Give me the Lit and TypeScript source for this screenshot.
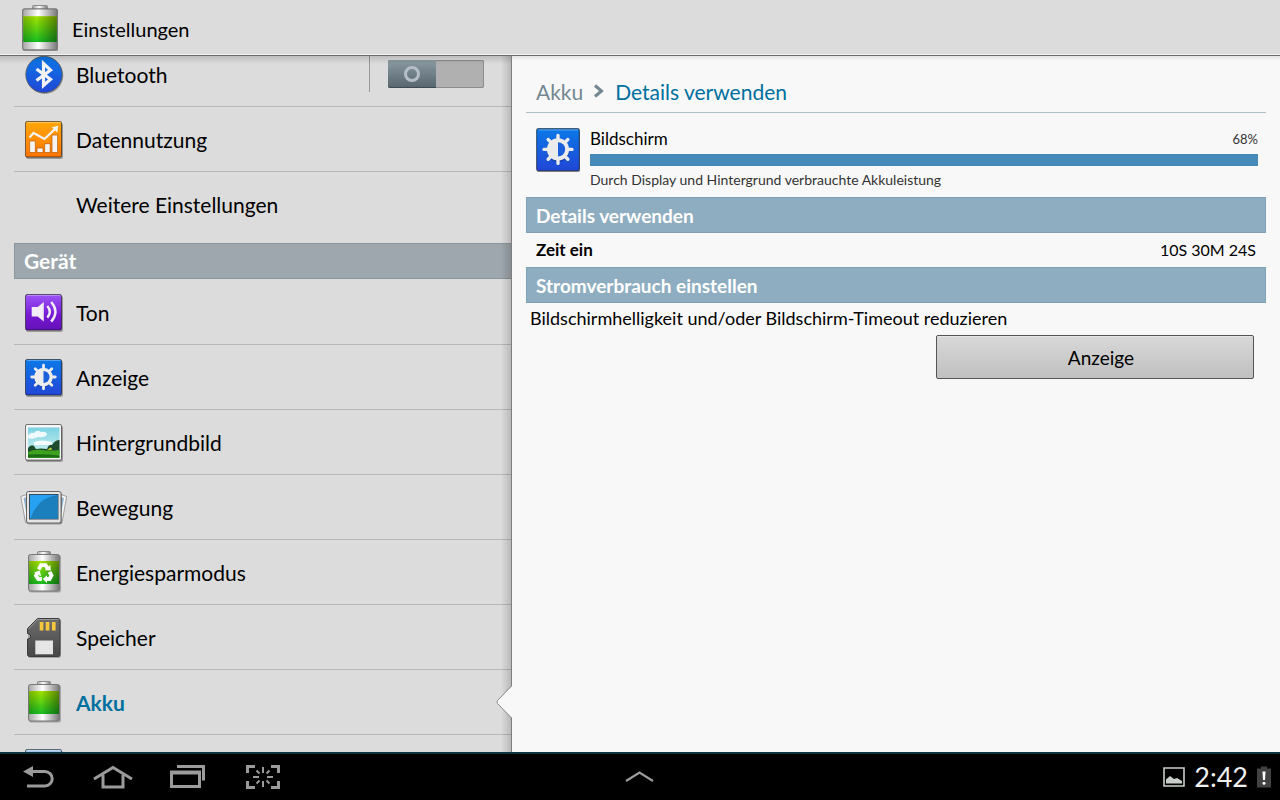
import { LitElement, html, svg, css, nothing } from "lit";
import { customElement, property, state } from "lit/decorators.js";

const gear = svg`
  <g fill="#000" opacity=".2"><circle cx="23.5" cy="25" r="9.6"/></g>
  <circle cx="23.5" cy="24" r="9.3" fill="#ececec"/>
  <g stroke="#ececec" stroke-width="2.8" stroke-linecap="round">
    <path d="M23.5 12.2V16M23.5 32V35.8M11.7 24H15M32 24H35.3M15.200 15.700L18 18.500M31.800 15.700L29 18.500M15.200 32.300L18 29.500M31.800 32.300L29 29.500"/>
  </g>
  <path d="M23.5 18a6 6 0 0 1 0 12z" fill="#1b5fdc"/>`;

const square = (fill: string) => svg`
  <rect x="6" y="8" width="37" height="36" rx="2" fill="#000" opacity=".3"/>
  <rect x="5.5" y="6.5" width="36" height="35.5" rx="1.5" fill=${fill} stroke="#000" stroke-opacity=".5"/>
  <path d="M7 7.5H40.5" stroke="#fff" stroke-opacity=".3"/>`;

const battery = svg`
  <defs>
    <linearGradient id="metal"><stop offset="0" stop-color="#a5a5a5"/><stop offset=".45" stop-color="#fff"/><stop offset="1" stop-color="#777"/></linearGradient>
    <linearGradient id="charge" x2="0" y2="1"><stop offset="0" stop-color="#a3e300"/><stop offset="1" stop-color="#17bf22"/></linearGradient>
    <linearGradient id="shade"><stop offset="0" stop-color="#000" stop-opacity=".22"/><stop offset=".4" stop-color="#000" stop-opacity="0"/><stop offset="1" stop-color="#000" stop-opacity=".42"/></linearGradient>
  </defs>
  <rect x="17.5" y="3.5" width="13" height="5" rx="1" fill="url(#metal)" stroke="#8a8a8a"/>
  <rect x="9" y="7" width="32" height="37.5" rx="2" fill="#000" opacity=".25"/>
  <rect x="8.5" y="6.5" width="31" height="36.5" rx="2" fill="url(#metal)" stroke="#777"/>
  <rect x="9" y="13" width="30" height="23" fill="url(#charge)"/>
  <rect x="9" y="13" width="30" height="23" fill="url(#shade)"/>`;

const blueDefs = svg`<defs><linearGradient id="blue" x2="0" y2="1"><stop offset="0" stop-color="#0b79e8"/><stop offset="1" stop-color="#2146d6"/></linearGradient></defs>`;

const icons: Record<string, unknown> = {
  bluetooth: svg`${blueDefs}
    <circle cx="24.8" cy="25.5" r="18.5" fill="#000" opacity=".3"/>
    <circle cx="24" cy="24.5" r="18.2" fill="url(#blue)" stroke="#555" stroke-width=".8"/>
    <path d="M16.500 19L30.500 29.300L23.500 35.500V13.500L30.500 20L16.500 30.500" fill="none" stroke="#f2f2f2" stroke-width="3.200"/>`,
  data: svg`
    <defs><linearGradient id="orange" x2="0" y2="1"><stop offset="0" stop-color="#ffa80a"/><stop offset="1" stop-color="#ff7400"/></linearGradient></defs>
    ${square("url(#orange)")}
    <g fill="#f4f4f4" stroke="#b85a00" stroke-width=".7">
      <path d="M9.700 26h5.600v11.500h-5.600zM17 33h6v4.500h-6zM24.700 28.700h5.500v8.800h-5.500zM32 20h5.600v17.500h-5.600z"/>
    </g>
    <path d="M9.500 22.500L13.500 18L24.500 24L36 13" fill="none" stroke="#f4f4f4" stroke-width="2.200"/>
    <path d="M31.800 12.300L38.200 10.800L37.300 17.500Z" fill="#f4f4f4"/>`,
  sound: svg`
    <defs><linearGradient id="violet" x2="0" y2="1"><stop offset="0" stop-color="#9d55f8"/><stop offset=".6" stop-color="#7616d2"/><stop offset="1" stop-color="#6411b8"/></linearGradient></defs>
    ${square("url(#violet)")}
    <path d="M11.700 19h6L23.800 14V33.600L17.700 28.600h-6z" fill="#f1ecf5"/>
    <path d="M27.300 18q5 5.800 0 11.600M31.200 14q8.500 9.800 0 19.600" fill="none" stroke="#f1ecf5" stroke-width="2.400"/>`,
  display: svg`${blueDefs}${square("url(#blue)")}${gear}`,
  wallpaper: svg`
    <defs><linearGradient id="sky" x2="0" y2="1"><stop offset="0" stop-color="#7bd2e2"/><stop offset="1" stop-color="#dcf5f2"/></linearGradient></defs>
    ${square("#f5f5f5")}
    <rect x="8" y="9.5" width="31.5" height="30" fill="url(#sky)"/>
    <path d="M8 18q2-4 6-3q3-4 7-1q6-1 6 3q-3 3-9 2q-6 3-10 1zM14 24q8-3 18 0v3H14z" fill="#fff" opacity=".85"/>
    <path d="M8 30q3-4 6-2l2 3q5-1 11 0q2-5 5-4q3-5 7.500-5V36H8z" fill="#1f4a2c"/>
    <path d="M8 34q6-3 14-2q8 1 17.500 0v8H8z" fill="#3da31e"/>
    <path d="M8 36.500q14-1 31.500 1v2H8z" fill="#1c6a14"/>
    <path d="M27 32l4-2.500l1 2z" fill="#d7e32e"/>`,
  motion: svg`
    <g stroke="#8c8c8c" stroke-width=".8">
      <path d="M.8 13.500L8 11V40L5.500 39.500Z" fill="#f4f4f4"/><path d="M3.500 15L7 14V34Z" fill="#8eb4cc" stroke="none"/>
      <path d="M46.700 13.500L39.500 11V40L42 39.500Z" fill="#f4f4f4"/><path d="M44 15L40.500 14V34Z" fill="#8eb4cc" stroke="none"/>
    </g>
    <rect x="7" y="9.5" width="35" height="32" rx="2" fill="#000" opacity=".3"/>
    <rect x="6.5" y="8.5" width="34.5" height="31.5" rx="2" fill="#e4e4e4" stroke="#666"/>
    <rect x="9.5" y="11.5" width="28.5" height="24.5" fill="#27a2f2" stroke="#3a4d5a"/>
    <path d="M37.500 12Q18 14 10.500 35.500H37.500Z" fill="#1c7fbd"/>`,
  saver: svg`${battery}
    <g fill="none" stroke="#fff" stroke-width="3.8">
      <path d="M18.700 21.500L21 17.200h4.500L27.500 20.300"/>
      <path d="M29.500 23.800L31.500 27.500L29.500 31H25.500"/>
      <path d="M21.800 31H18.300L16 27.600L17.500 25"/>
    </g>
    <path d="M24.700 22.300L30.800 22.500L30.300 16.800ZM27 27.200L22.700 31L27 35ZM14 24.600L19.800 22.500L21 28.200Z" fill="#fff"/>`,
  storage: svg`
    <defs><linearGradient id="card" x2="0" y2="1"><stop offset="0" stop-color="#6d6d6d"/><stop offset="1" stop-color="#474747"/></linearGradient></defs>
    <path d="M18 6.500H39q2 0 2 2V43q0 2-2 2H10q-2 0-2-2V18z" fill="#000" opacity=".25"/>
    <path d="M17.500 5.500H38q2 0 2 2V41.500q0 2-2 2H9.500q-2 0-2-2V26l3-1V22L7.500 20.500V15.500z" fill="url(#card)" stroke="#3c3c3c"/>
    <path d="M17.700 6.500H38.500M8.500 16L17.700 6.500" fill="none" stroke="#aaa" stroke-opacity=".7"/>
    <path d="M19.700 9h3.700v8.500h-3.700zM25.700 9h3.700v8.500h-3.700zM31.900 9h3.700v8.500h-3.700z" fill="#f5c83c"/>
    <path d="M15.300 27.500H33V41.300H15.300z" fill="#e6e6e6"/>`,
  battery,
  next: square("#a6c4e8"),
};

interface Entry {
  id: string;
  label?: string;
  icon?: string;
  toggle?: boolean;
}

const wireless: Entry[] = [
  { id: "bluetooth", label: "Bluetooth", icon: "bluetooth", toggle: true },
  { id: "daten", label: "Datennutzung", icon: "data" },
  { id: "weitere", label: "Weitere Einstellungen" },
];

const device: Entry[] = [
  { id: "ton", label: "Ton", icon: "sound" },
  { id: "anzeige", label: "Anzeige", icon: "display" },
  { id: "hintergrundbild", label: "Hintergrundbild", icon: "wallpaper" },
  { id: "bewegung", label: "Bewegung", icon: "motion" },
  { id: "energiesparmodus", label: "Energiesparmodus", icon: "saver" },
  { id: "speicher", label: "Speicher", icon: "storage" },
  { id: "akku", label: "Akku", icon: "battery" },
  { id: "next", icon: "next" },
];

@customElement("settings-icon")
class SettingsIcon extends LitElement {
  @property() name = "";
  @property() box = "0 0 48 48";
  static styles = css`
    :host { display: block; width: 48px; height: 48px; flex: none; }
    svg { display: block; width: 100%; height: 100%; }
  `;
  render() {
    return html`<svg viewBox=${this.box} aria-hidden="true">${icons[this.name] ?? nothing}</svg>`;
  }
}

@customElement("settings-list")
class SettingsList extends LitElement {
  @property() selected = "akku";
  @state() private bluetoothOn = false;

  static styles = css`
    :host {
      display: block;
      position: relative;
      overflow: hidden;
      background: #dcdcdc;
      font-size: 21px;
    }
    .edge {
      position: absolute;
      inset: 0;
      pointer-events: none;
      border-right: 1px solid #7f7f7f;
      background:
        linear-gradient(to bottom, rgba(0, 0, 0, 0.14), transparent) top / 100% 8px no-repeat,
        linear-gradient(to left, rgba(0, 0, 0, 0.16), transparent) right / 10px 100% no-repeat;
    }
    .scroller { margin-top: -14px; padding-left: 14px; }
    ul { list-style: none; margin: 0; padding: 0; }
    .row {
      position: relative;
      display: flex;
      align-items: center;
      height: 64px;
      border-bottom: 1px solid #b8b8b8;
    }
    .wireless .row:last-child { border-color: transparent; }
    .link {
      flex: 1;
      display: flex;
      align-items: center;
      gap: 8px;
      padding-left: 6px;
      color: #000;
      text-decoration: none;
    }
    .selected .link { color: #00709f; font-weight: 700; }
    .pointer {
      position: absolute;
      right: 0;
      top: 15px;
      width: 16px;
      height: 34px;
      z-index: 1;
    }
    .group {
      box-sizing: border-box;
      height: 36px;
      margin: 6px 0 1px;
      padding: 0 9px;
      border: 1px solid #8b969c;
      border-right: 0;
      background: #9ea7ad;
      color: #fff;
      line-height: 34px;
      font-weight: 700;
    }
    .switch {
      position: relative;
      display: flex;
      align-items: center;
      margin-right: 28px;
      padding-left: 18px;
      border-left: 1px solid #999;
      height: 36px;
    }
    .switch input {
      position: absolute;
      inset: 0;
      margin: 0;
      opacity: 0;
    }
    .track {
      display: flex;
      box-sizing: border-box;
      width: 96px;
      height: 28px;
      border-radius: 2px;
      background: #b0b0b0;
      box-shadow: inset 0 0 0 1px #8c8c8c;
    }
    .thumb {
      display: grid;
      place-items: center;
      width: 48px;
      border-radius: 2px 0 0 2px;
      background: linear-gradient(#8b9aa2, #586670);
      border-bottom: 1px solid #3f4a54;
    }
    input:checked + .track { justify-content: flex-end; }
    .ring {
      width: 10px;
      height: 10px;
      border: 3px solid #b4bfc7;
      border-radius: 50%;
    }
  `;

  private row(e: Entry) {
    const on = e.id === this.selected;
    return html`<li class="row ${on ? "selected" : ""}">
      <a class="link" href="#${e.id}" aria-current=${on ? "page" : nothing}>
        <settings-icon name=${e.icon ?? ""}></settings-icon>
        ${e.label ? html`<span>${e.label}</span>` : nothing}
      </a>
      ${e.toggle
        ? html`<label class="switch">
            <input type="checkbox" role="switch" aria-label=${e.label ?? ""} .checked=${this.bluetoothOn}
              @change=${(ev: Event) => (this.bluetoothOn = (ev.target as HTMLInputElement).checked)} />
            <span class="track"><span class="thumb"><span class="ring"></span></span></span>
          </label>`
        : nothing}
      ${on
        ? html`<svg class="pointer" viewBox="0 0 16 34" aria-hidden="true">
            <path d="M16 1L1.500 15.500Q.5 17 1.500 18.500L16 33Z" fill="#f8f8f8"/>
            <path d="M15.500 1L1.500 15.500Q.5 17 1.500 18.500L15.500 33" fill="none" stroke="#8a8a8a"/>
          </svg>`
        : nothing}
    </li>`;
  }

  render() {
    return html`
      <nav class="scroller">
        <ul class="wireless">${wireless.map((e) => this.row(e))}</ul>
        <div class="group">Gerät</div>
        <ul>${device.map((e) => this.row(e))}</ul>
      </nav>
      <div class="edge"></div>`;
  }
}

@customElement("battery-details")
class BatteryDetails extends LitElement {
  @property({ type: Number }) percent = 68;

  static styles = css`
    :host {
      display: block;
      background: linear-gradient(#e4e4e4, #f8f8f8 5px);
      padding: 0 14px;
      overflow: hidden;
    }
    .crumbs {
      display: flex;
      align-items: center;
      gap: 10px;
      box-sizing: border-box;
      height: 57px;
      margin-bottom: 1px;
      padding: 14px 10px 0;
      border-bottom: 1px solid #adbfc9;
      font-size: 21px;
    }
    .crumbs a { color: #738791; text-decoration: none; }
    .crumbs svg { width: 12px; height: 16px; }
    .current { color: #00709f; }
    .usage {
      display: grid;
      grid-template-columns: 44px 1fr;
      column-gap: 10px;
      padding: 14px 8px 6px 10px;
    }
    .usage settings-icon { width: 44px; height: 44px; }
    .line {
      display: flex;
      justify-content: space-between;
      align-items: center;
      height: 26px;
      box-sizing: border-box;
      padding-bottom: 6px;
      font-size: 17px;
    }
    .percent { padding-top: 2px; font-size: 13px; color: #333; }
    progress {
      display: block;
      width: 100%;
      height: 12px;
      border: 0;
      appearance: none;
      background: #468ab7;
    }
    progress::-webkit-progress-bar { background: #468ab7; }
    progress::-webkit-progress-value { background: #468ab7; }
    .caption { margin: 0; padding: 3px 0 1px; font-size: 14px; line-height: 21px; color: #333; }
    h2 {
      box-sizing: border-box;
      height: 36px;
      margin: 0;
      padding: 0 9px;
      border: 1px solid #80a0b4;
      background: #8fadc0;
      color: #fff;
      font-size: 19px;
      line-height: 36px;
      font-weight: 700;
    }
    .stat {
      display: flex;
      justify-content: space-between;
      margin: 0;
      padding: 0 10px;
      font-size: 17px;
      line-height: 34px;
    }
    .stat dt { font-weight: 700; }
    .stat dd { margin: 0; font-size: 16px; }
    .hint { margin: 0 4px 2px; font-size: 18px; line-height: 30px; }
    .action {
      display: block;
      width: 43%;
      height: 44px;
      margin: 0 12px 0 auto;
      padding: 0 0 0 12px;
      border: 1px solid #555;
      border-radius: 2px;
      background: linear-gradient(#d8d8d8, #c0c0c0);
      box-shadow: inset 0 1px 0 #e6e6e6;
      font: inherit;
      font-size: 19px;
      color: #000;
    }
  `;

  render() {
    return html`
      <nav class="crumbs">
        <a href="#akku">Akku</a>
        <svg viewBox="0 0 12 16" aria-hidden="true"><path d="M2 2.500L8.500 8L2 13.500" fill="none" stroke="#738791" stroke-width="3"/></svg>
        <span class="current">Details verwenden</span>
      </nav>
      <section class="usage">
        <settings-icon name="display" box="5 6 37 37"></settings-icon>
        <div>
          <div class="line"><span id="screen">Bildschirm</span><span class="percent">${this.percent}%</span></div>
          <progress aria-labelledby="screen" max="100" value=${this.percent}></progress>
          <p class="caption">Durch Display und Hintergrund verbrauchte Akkuleistung</p>
        </div>
      </section>
      <h2>Details verwenden</h2>
      <dl class="stat"><dt>Zeit ein</dt><dd>10S 30M 24S</dd></dl>
      <h2>Stromverbrauch einstellen</h2>
      <p class="hint">Bildschirmhelligkeit und/oder Bildschirm-Timeout reduzieren</p>
      <button class="action">Anzeige</button>`;
  }
}

@customElement("system-bar")
class SystemBar extends LitElement {
  static styles = css`
    :host {
      display: grid;
      grid-template-columns: 1fr auto 1fr;
      align-items: center;
      height: 46px;
      background: #000;
      border-top: 2px solid #0c3342;
    }
    button {
      display: grid;
      place-items: center;
      width: 75px;
      height: 46px;
      padding: 0;
      border: 0;
      background: none;
    }
    .keys { display: flex; }
    .key { width: 42px; height: 32px; fill: none; stroke: #9b9b9b; stroke-width: 3; }
    .status {
      display: flex;
      justify-content: flex-end;
      align-items: center;
      gap: 9px;
      padding-right: 9px;
      color: #f0f0f0;
      font-size: 27px;
      line-height: 46px;
    }
    .photo { width: 22px; height: 20px; }
    .cell { width: 14px; height: 22px; }
  `;
  render() {
    return html`
      <div class="keys">
        <button aria-label="Zurück"><svg class="key" viewBox="0 0 42 32">
          <path d="M13 10.500H28a7.200 7.200 0 0 1 0 14.400H10"/><path d="M6 10.500L16 5V16Z" fill="#9b9b9b" stroke="none"/></svg></button>
        <button aria-label="Startseite"><svg class="key" viewBox="0 0 42 32">
          <path d="M2 18L21 6.500L40 18"/><path d="M11 14V26H31V14"/></svg></button>
        <button aria-label="Letzte Apps"><svg class="key" viewBox="0 0 42 32">
          <path d="M4.500 11.500H32.500V25.500H4.500Z"/><path d="M3 11.500H34" stroke-width="4"/><path d="M10 5.500H36.500V19.500"/></svg></button>
        <button aria-label="Screenshot"><svg class="key" viewBox="0 0 42 32">
          <path d="M5.500 12V5.500H13M29 5.500H36.500V12M36.500 20V26.500H29M13 26.500H5.500V20"/>
          <path d="M21 6V12M21 20V26M11 16H17M25 16H31M14.500 9.500L17.500 12.500M27.500 9.500L24.500 12.500M14.500 22.500L17.500 19.500M27.500 22.500L24.500 19.500" stroke-width="2"/></svg></button>
      </div>
      <button aria-label="Mini-Apps"><svg class="key" viewBox="0 0 42 32">
        <path d="M7 20L20.500 11.500L34 20" stroke-width="2.200"/></svg></button>
      <div class="status">
        <svg class="photo" viewBox="0 0 22 20" aria-hidden="true"><path d="M1 1H21V19H1Z" fill="none" stroke="#c9cfc9" stroke-width="1.600"/>
          <path d="M3 16.500V12.500L7 9L11 12L14 11L19 14V16.500Z" fill="#c9cfc9"/></svg>
        <time>2:42</time>
        <svg class="cell" viewBox="0 0 14 22" aria-hidden="true"><path d="M0 2.500H4V.5H10V2.500H14V21.500H0Z" fill="#424242"/>
          <path d="M5.500 5.500H8.500L8 14H6Z" fill="#fff"/><circle cx="7" cy="17.200" r="1.500" fill="#fff"/></svg>
      </div>`;
  }
}

@customElement("app-root")
class AppRoot extends LitElement {
  static styles = css`
    :host {
      display: grid;
      grid-template-rows: auto minmax(0, 1fr) auto;
      height: 100vh;
      overflow: hidden;
      font-family: Lato, "Open Sans", sans-serif;
      color: #000;
    }
    header {
      display: flex;
      align-items: center;
      gap: 14px;
      height: 55px;
      padding: 0 22px;
      background: #dcdcdc;
      border-bottom: 1px solid #6a6a6a;
      box-shadow: inset 0 -1px 0 #f2f2f2;
    }
    header settings-icon { width: 36px; height: 46px; }
    h1 { margin: 0; padding-top: 2px; font-size: 20px; font-weight: 400; }
    main { display: grid; grid-template-columns: 2fr 3fr; min-height: 0; }
  `;
  render() {
    return html`
      <header>
        <settings-icon name="battery" box="8 3 32 41"></settings-icon>
        <h1>Einstellungen</h1>
      </header>
      <main>
        <settings-list selected="akku"></settings-list>
        <battery-details .percent=${68}></battery-details>
      </main>
      <system-bar></system-bar>`;
  }
}
